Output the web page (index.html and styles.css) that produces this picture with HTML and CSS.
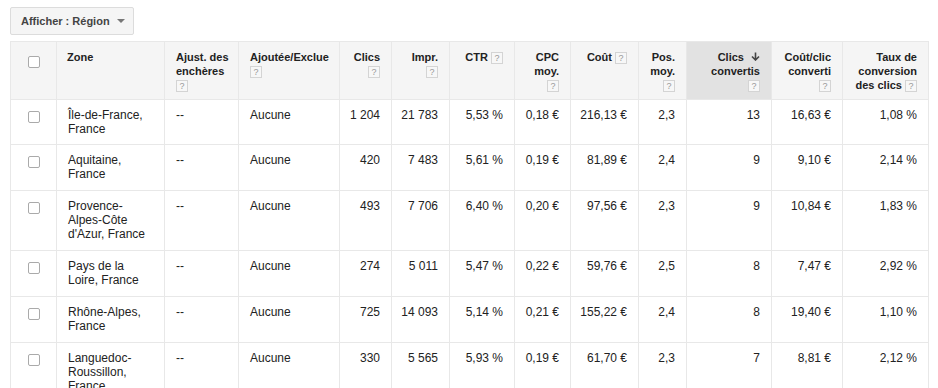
FILE: index.html
```
<!doctype html>
<html>
<head>
    <meta charset="utf-8">
    <title>Zones</title>
    <link rel="stylesheet" href="styles.css">
</head>
<body>
<div class="toolbar">
    <button class="view-button">Afficher : Région <span class="caret"></span></button>
</div>

<table class="report">
    <colgroup>
        <col style="width:46px">
        <col style="width:108px">
        <col style="width:74px">
        <col style="width:101px">
        <col style="width:52px">
        <col style="width:58px">
        <col style="width:65px">
        <col style="width:56px">
        <col style="width:68px">
        <col style="width:48px">
        <col style="width:85px">
        <col style="width:71px">
        <col style="width:86px">
    </colgroup>
    <thead>
    <tr>
        <th class="check"><span class="box"></span></th>
        <th>Zone</th>
        <th>Ajust. des enchères<br><span class="help">?</span></th>
        <th>Ajoutée/Exclue<br><span class="help">?</span></th>
        <th class="num">Clics<br><span class="help">?</span></th>
        <th class="num">Impr.<br><span class="help">?</span></th>
        <th class="num">CTR <span class="help">?</span></th>
        <th class="num">CPC<br>moy.<br><span class="help">?</span></th>
        <th class="num">Coût <span class="help">?</span></th>
        <th class="num">Pos.<br>moy.<br><span class="help">?</span></th>
        <th class="num sorted">Clics <svg class="sort" width="9" height="9" viewBox="0 0 9 9"><path d="M4.5 0.5v7M1 4.5l3.5 3.5 3.5-3.5" fill="none" stroke="#444" stroke-width="1.6"/></svg><br>convertis<br><span class="help">?</span></th>
        <th class="num">Coût/clic<br>converti<br><span class="help">?</span></th>
        <th class="num">Taux de<br>conversion<br>des clics <span class="help">?</span></th>
    </tr>
    </thead>
    <tbody>
    <tr>
        <td class="check"><span class="box"></span></td>
        <td>Île-de-France, France</td>
        <td>--</td>
        <td>Aucune</td>
        <td class="num">1 204</td>
        <td class="num">21 783</td>
        <td class="num">5,53 %</td>
        <td class="num">0,18 €</td>
        <td class="num">216,13 €</td>
        <td class="num">2,3</td>
        <td class="num">13</td>
        <td class="num">16,63 €</td>
        <td class="num">1,08 %</td>
    </tr>
    <tr>
        <td class="check"><span class="box"></span></td>
        <td>Aquitaine, France</td>
        <td>--</td>
        <td>Aucune</td>
        <td class="num">420</td>
        <td class="num">7 483</td>
        <td class="num">5,61 %</td>
        <td class="num">0,19 €</td>
        <td class="num">81,89 €</td>
        <td class="num">2,4</td>
        <td class="num">9</td>
        <td class="num">9,10 €</td>
        <td class="num">2,14 %</td>
    </tr>
    <tr>
        <td class="check"><span class="box"></span></td>
        <td>Provence-Alpes-Côte d'Azur, France</td>
        <td>--</td>
        <td>Aucune</td>
        <td class="num">493</td>
        <td class="num">7 706</td>
        <td class="num">6,40 %</td>
        <td class="num">0,20 €</td>
        <td class="num">97,56 €</td>
        <td class="num">2,3</td>
        <td class="num">9</td>
        <td class="num">10,84 €</td>
        <td class="num">1,83 %</td>
    </tr>
    <tr>
        <td class="check"><span class="box"></span></td>
        <td>Pays de la Loire, France</td>
        <td>--</td>
        <td>Aucune</td>
        <td class="num">274</td>
        <td class="num">5 011</td>
        <td class="num">5,47 %</td>
        <td class="num">0,22 €</td>
        <td class="num">59,76 €</td>
        <td class="num">2,5</td>
        <td class="num">8</td>
        <td class="num">7,47 €</td>
        <td class="num">2,92 %</td>
    </tr>
    <tr>
        <td class="check"><span class="box"></span></td>
        <td>Rhône-Alpes, France</td>
        <td>--</td>
        <td>Aucune</td>
        <td class="num">725</td>
        <td class="num">14 093</td>
        <td class="num">5,14 %</td>
        <td class="num">0,21 €</td>
        <td class="num">155,22 €</td>
        <td class="num">2,4</td>
        <td class="num">8</td>
        <td class="num">19,40 €</td>
        <td class="num">1,10 %</td>
    </tr>
    <tr>
        <td class="check"><span class="box"></span></td>
        <td>Languedoc-Roussillon, France</td>
        <td>--</td>
        <td>Aucune</td>
        <td class="num">330</td>
        <td class="num">5 565</td>
        <td class="num">5,93 %</td>
        <td class="num">0,19 €</td>
        <td class="num">61,70 €</td>
        <td class="num">2,3</td>
        <td class="num">7</td>
        <td class="num">8,81 €</td>
        <td class="num">2,12 %</td>
    </tr>
    </tbody>
</table>
</body>
</html>
```

FILE: styles.css
```
html, body {
    margin: 0;
    background: #fff;
}

body {
    padding: 7px 10px 0;
    font-family: "Liberation Sans", Arial, sans-serif;
    color: #222;
}

/* top button */
.toolbar {
    margin-bottom: 6px;
}

.view-button {
    height: 28px;
    width: 124px;
    padding: 0 0 0 10px;
    text-align: left;
    background: #f5f5f5;
    border: 1px solid #dcdcdc;
    border-radius: 2px;
    font-family: inherit;
    font-size: 11px;
    font-weight: bold;
    color: #444;
}

.caret {
    display: inline-block;
    margin-left: 4px;
    vertical-align: 2px;
    border-left: 4px solid transparent;
    border-right: 4px solid transparent;
    border-top: 4px solid #777;
}

/* table */
.report {
    border-collapse: collapse;
    table-layout: fixed;
    width: 919px;
}

.report th, .report td {
    border: 1px solid #e8e8e8;
    vertical-align: top;
    text-align: left;
    padding: 8px 11px 9px 10px;
}

.report th {
    background: #f5f5f5;
    font-size: 11px;
    line-height: 14px;
    font-weight: bold;
    padding: 8px 4px 7px 10px;
}

.report th:nth-child(3),
.report th:nth-child(4) {
    padding-left: 11px;
}

.report th.num {
    padding-left: 2px;
    padding-right: 11px;
}

.report th.sorted {
    background: #e2e2e2;
}

.report td {
    font-size: 12px;
    line-height: 14px;
}

.report tbody tr:first-child td {
    padding-bottom: 8px;
}

.report .num {
    text-align: right;
}

.report td.num {
    padding-left: 4px;
}

.report .check {
    text-align: center;
    padding-left: 0;
    padding-right: 0;
}

.report th.check {
    padding-top: 11px;
}

.report td:nth-child(2),
.report td:nth-child(3),
.report td:nth-child(4) {
    padding-left: 11px;
}

/* checkbox */
.box {
    display: inline-block;
    width: 10px;
    height: 10px;
    border: 1px solid #aaa;
    border-radius: 2px;
    background: #fff;
    margin-top: 3px;
}

/* help marker */
.help {
    display: inline-block;
    box-sizing: border-box;
    width: 12px;
    height: 12px;
    line-height: 10px;
    margin-top: 2px;
    border: 1px solid #d4d4d4;
    background: #f7f7f7;
    color: #999;
    font-size: 9px;
    font-weight: normal;
    text-align: center;
    vertical-align: top;
}

.sort {
    margin-left: 4px;
    vertical-align: 0;
}
```
